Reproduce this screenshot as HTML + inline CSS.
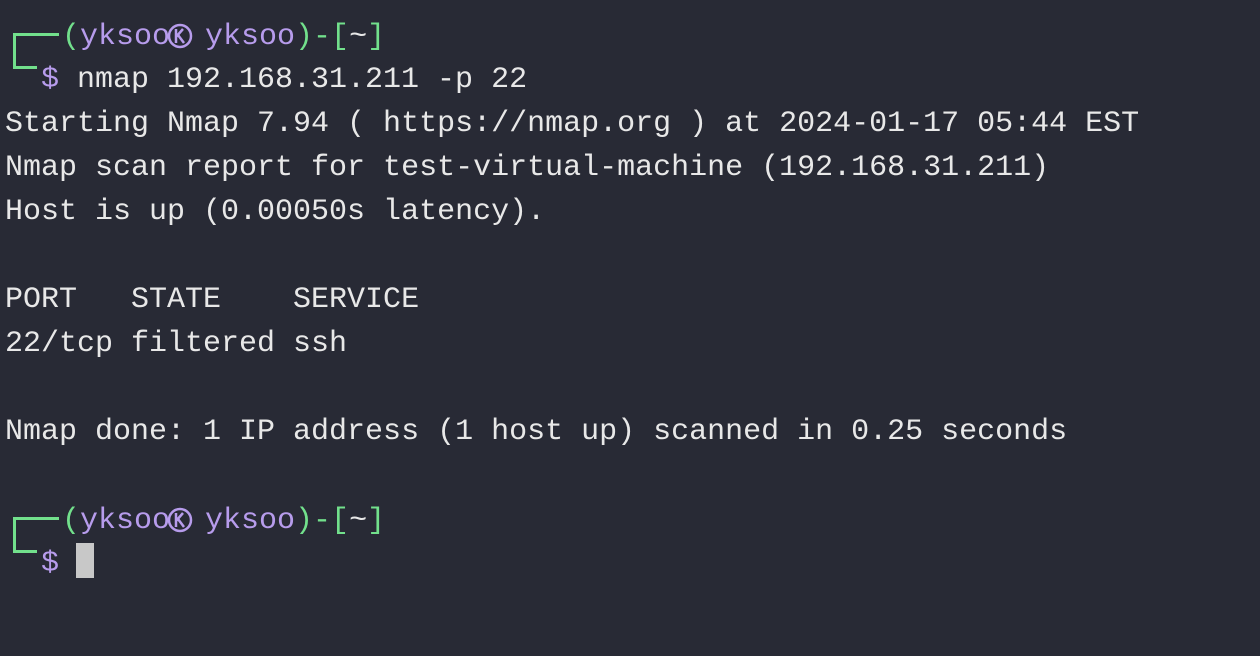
<!DOCTYPE html>
<html><head><meta charset="utf-8"><style>
html,body{margin:0;padding:0;background:#282a35;width:1260px;height:656px;overflow:hidden}
.t{position:absolute;font-family:"Liberation Mono",monospace;font-size:30px;line-height:44px;color:#e8e8e8;white-space:pre}
.g{color:#72e08c}.p{color:#b79cec}
.v{position:absolute;background:#72e08c}
</style></head><body>
<div class="v" style="left:13px;top:33px;width:2.5px;height:35px"></div>
<div class="v" style="left:13px;top:33px;width:46px;height:2.5px"></div>
<div class="v" style="left:13px;top:66px;width:24px;height:2.5px"></div>
<div class="t" style="left:62px;top:15px"><span class="g">(</span><span class="p">yksoo</span><span style="display:inline-block;width:35px"></span><span class="p">yksoo</span><span class="g">)-[</span>~<span class="g">]</span></div>
<svg style="position:absolute;left:166px;top:22px" width="28" height="28" viewBox="0 0 28 28"><circle cx="14" cy="14" r="11" fill="none" stroke="#b79cec" stroke-width="2.5"/><path d="M10 7v14M10 15l7-8M12 13l6 8" stroke="#b79cec" stroke-width="2.5" fill="none"/></svg>
<div class="t p" style="left:41px;top:58px">$</div>
<div class="t" style="left:77px;top:58px">nmap 192.168.31.211 -p 22</div>
<div class="t" style="left:5px;top:102px">Starting Nmap 7.94 ( https://nmap.org ) at 2024-01-17 05:44 EST
Nmap scan report for test-virtual-machine (192.168.31.211)
Host is up (0.00050s latency).

PORT   STATE    SERVICE
22/tcp filtered ssh

Nmap done: 1 IP address (1 host up) scanned in 0.25 seconds</div>
<div class="v" style="left:13px;top:517px;width:2.5px;height:35px"></div>
<div class="v" style="left:13px;top:517px;width:46px;height:2.5px"></div>
<div class="v" style="left:13px;top:550px;width:24px;height:2.5px"></div>
<div class="t" style="left:62px;top:499px"><span class="g">(</span><span class="p">yksoo</span><span style="display:inline-block;width:35px"></span><span class="p">yksoo</span><span class="g">)-[</span>~<span class="g">]</span></div>
<svg style="position:absolute;left:166px;top:506px" width="28" height="28" viewBox="0 0 28 28"><circle cx="14" cy="14" r="11" fill="none" stroke="#b79cec" stroke-width="2.5"/><path d="M10 7v14M10 15l7-8M12 13l6 8" stroke="#b79cec" stroke-width="2.5" fill="none"/></svg>
<div class="t p" style="left:41px;top:542px">$</div>
<div style="position:absolute;left:76px;top:543px;width:18px;height:35px;background:#c8c8c8"></div>
</body></html>
